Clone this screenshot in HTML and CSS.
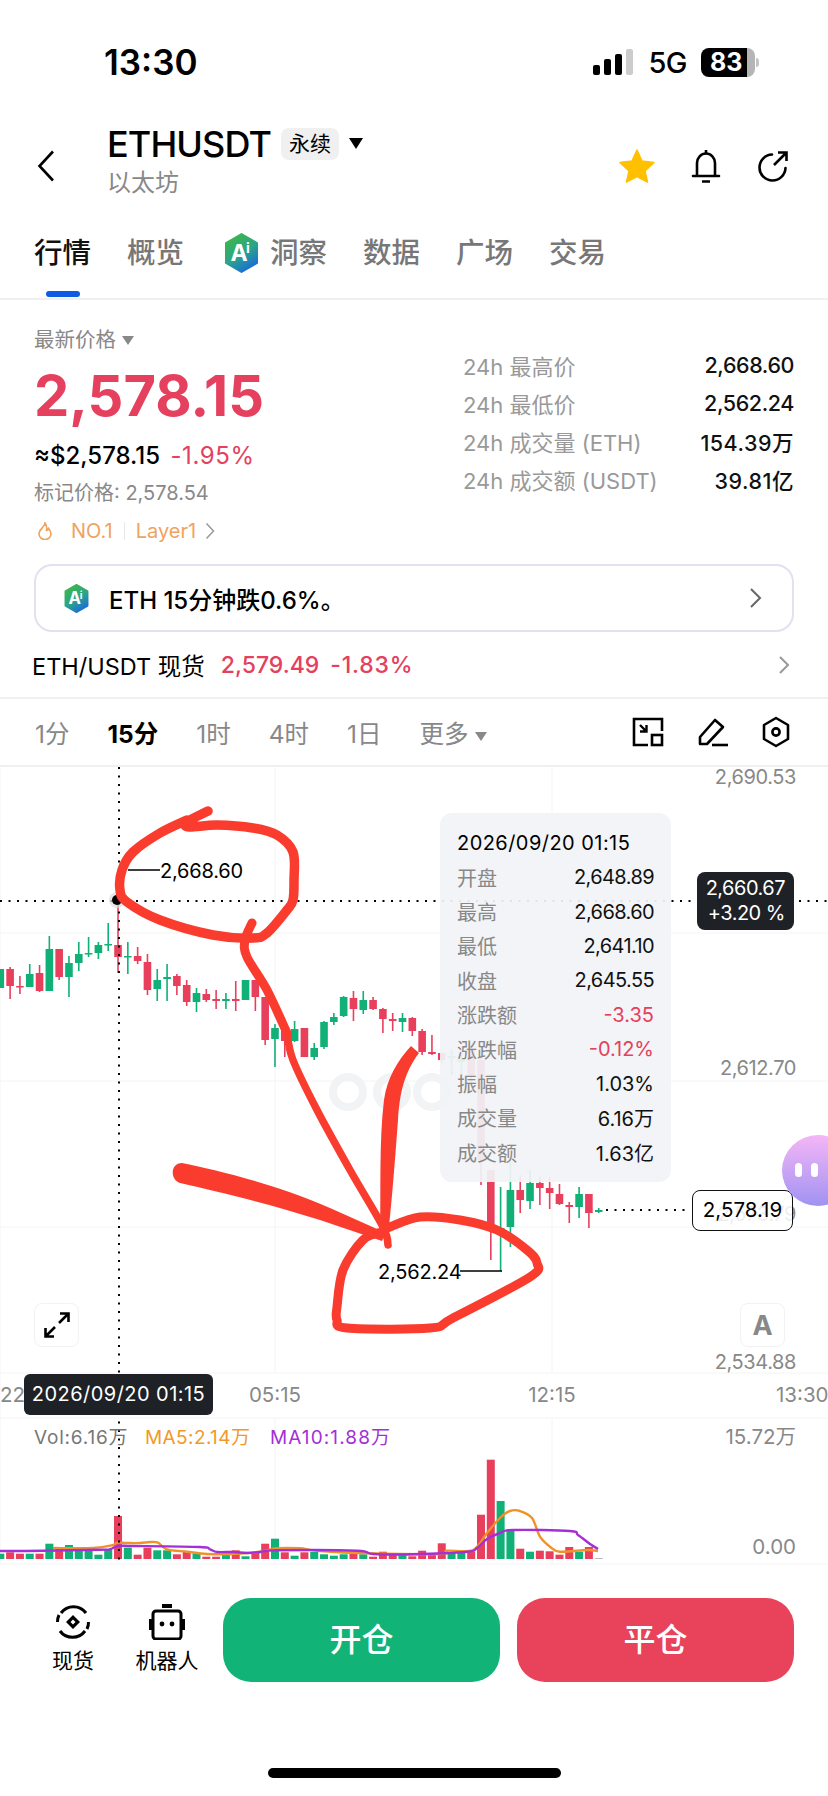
FILE: index.html
```html
<!DOCTYPE html>
<html lang="zh-CN">

<head>
    <meta charset="UTF-8" />
    <title>ETHUSDT 永续</title>
    <link rel="stylesheet" href="styles.css">
</head>

<body>
    <div class="page">
        <div class="status-bar">
            <span class="clock">13:30</span>
            <div class="status-right">
                <svg class="signal" width="41" height="26" viewBox="0 0 41 26">
                    <rect x="0" y="16" width="7" height="10" rx="2" fill="#000" />
                    <rect x="11" y="10" width="7" height="16" rx="2" fill="#000" />
                    <rect x="22" y="5" width="7" height="21" rx="2" fill="#000" />
                    <rect x="33" y="0" width="7" height="26" rx="2" fill="#ccc" />
                </svg>
                <span class="net">5G</span>
                <div class="battery"><span>83</span></div>
            </div>
        </div>

        <div class="symbol-head">
            <svg class="back" width="18" height="32" viewBox="0 0 18 32">
                <path d="M16 1.5 L2.5 16 L16 30.5" fill="none" stroke="#000" stroke-width="2.6" />
            </svg>
            <div class="symbol-title">
                <div class="symbol-line">
                    <span class="symbol-name">ETHUSDT</span>
                    <span class="symbol-badge">永续</span>
                    <span class="tri tri-black"></span>
                </div>
                <div class="symbol-sub">以太坊</div>
            </div>
            <div class="head-icons">
                <svg width="36" height="34" viewBox="0 0 36 34">
                    <path d="M18 1 L23 12 L35 13.5 L26 22 L28.5 33 L18 27.5 L7.5 33 L10 22 L1 13.5 L13 12 Z" fill="#ffc000" stroke="#ffc000" stroke-width="1.5" stroke-linejoin="round" />
                </svg>
                <svg width="30" height="34" viewBox="0 0 30 34">
                    <path d="M6 26 V14 a9 9.5 0 0 1 18 0 V26 M2 27 H28" fill="none" stroke="#000" stroke-width="2.6" stroke-linecap="round" />
                    <path d="M15 1 V4 M11 32.5 H19" fill="none" stroke="#000" stroke-width="2.6" />
                </svg>
                <svg width="32" height="32" viewBox="0 0 32 32">
                    <path d="M15 4.5 A13 13 0 1 0 28.5 18" fill="none" stroke="#000" stroke-width="2.6" stroke-linecap="round" />
                    <path d="M17 15 L29 3 M21 2.5 H29.5 V11" fill="none" stroke="#000" stroke-width="2.6" />
                </svg>
            </div>
        </div>

        <div class="tabs">
            <span class="tab tab-active">行情</span>
            <span class="tab">概览</span>
            <span class="tab tab-ai">
                <svg class="ai-logo" width="35" height="40" viewBox="0 0 35 40">
                    <defs>
                        <linearGradient id="aiGrad" x1="0.1" y1="0.1" x2="0.6" y2="1">
                            <stop offset="0" stop-color="#3db54a" />
                            <stop offset="0.55" stop-color="#2aa58a" />
                            <stop offset="1" stop-color="#1c6fd6" />
                        </linearGradient>
                    </defs>
                    <path d="M17.5 1 L33 10 V30 L17.5 39 L2 30 V10 Z" fill="url(#aiGrad)" stroke="url(#aiGrad)" stroke-width="2" stroke-linejoin="round" />
                    <text class="ai-letter" x="15" y="28" font-size="23">A</text>
                    <text class="ai-letter" x="24" y="20" font-size="14">i</text>
                </svg>
                洞察
            </span>
            <span class="tab">数据</span>
            <span class="tab">广场</span>
            <span class="tab">交易</span>
        </div>

        <div class="market">
            <div class="market-left">
                <div class="price-label">最新价格 <span class="tri tri-grey"></span></div>
                <div class="last-price">2,578.15</div>
                <div class="usd-line">≈$2,578.15 <span class="red">-1.95%</span></div>
                <div class="mark-price">标记价格: 2,578.54</div>
                <div class="tags">
                    <svg width="16" height="18" viewBox="0 0 16 18">
                        <path d="M8 1 C8 5 2 7 2 12 A6 5.5 0 0 0 14 12 C14 9.5 12.5 8 11.5 6.5 C11 8 10 8.5 9.5 8.5 C10 6 9.5 3 8 1 Z" fill="none" stroke="#f0a35e" stroke-width="1.6" />
                    </svg>
                    <span class="tag-rank">NO.1</span>
                    <span class="tag-sep"></span>
                    <span>Layer1</span>
                    <svg width="10" height="18" viewBox="0 0 10 18">
                        <path d="M1.5 1.5 L8.5 9 L1.5 16.5" fill="none" stroke="#999" stroke-width="1.5" />
                    </svg>
                </div>
            </div>
            <div class="stats">
                <div class="stat-row"><span>24h 最高价</span><b>2,668.60</b></div>
                <div class="stat-row"><span>24h 最低价</span><b>2,562.24</b></div>
                <div class="stat-row"><span>24h 成交量 (ETH)</span><b class="stat-wide">154.39万</b></div>
                <div class="stat-row"><span>24h 成交额 (USDT)</span><b class="stat-wide">39.81亿</b></div>
            </div>
        </div>

        <div class="ai-box">
            <svg width="27" height="29" viewBox="0 0 35 40">
                <path d="M17.5 1 L33 10 V30 L17.5 39 L2 30 V10 Z" fill="url(#aiGrad)" stroke="url(#aiGrad)" stroke-width="2" stroke-linejoin="round" />
                <text class="ai-letter" x="15" y="28" font-size="23">A</text>
                <text class="ai-letter" x="24" y="20" font-size="14">i</text>
            </svg>
            <span class="ai-text">ETH 15分钟跌0.6%。</span>
            <svg class="ai-arrow" width="13" height="22" viewBox="0 0 13 22">
                <path d="M2 2 L11 11 L2 20" fill="none" stroke="#666" stroke-width="2" />
            </svg>
        </div>

        <div class="spot-row">
            <span class="spot-name">ETH/USDT 现货</span>
            <span class="spot-price red">2,579.49</span>
            <span class="spot-change red">-1.83%</span>
            <svg class="spot-arrow" width="12" height="20" viewBox="0 0 12 20">
                <path d="M2 2 L10 10 L2 18" fill="none" stroke="#999" stroke-width="2" />
            </svg>
        </div>

        <div class="intervals">
            <span>1分</span>
            <span class="interval-active">15分</span>
            <span>1时</span>
            <span>4时</span>
            <span>1日</span>
            <span class="interval-more">更多 <span class="tri tri-grey"></span></span>
            <div class="tool-icons">
                <svg width="32" height="30" viewBox="0 0 32 30">
                    <path d="M16 28 H2 V2 H30 V14" fill="none" stroke="#000" stroke-width="2.6" />
                    <rect x="20" y="18" width="10" height="10" fill="none" stroke="#000" stroke-width="2.6" />
                    <path d="M8 8 L14 14 M14.5 8 V14.5 H8" fill="none" stroke="#000" stroke-width="2.4" />
                </svg>
                <svg width="32" height="30" viewBox="0 0 32 30">
                    <path d="M3 27 V20 L18 3 L26 10 L10 27 Z" fill="none" stroke="#000" stroke-width="2.6" stroke-linejoin="round" />
                    <path d="M15 28 H31" fill="none" stroke="#000" stroke-width="2.6" />
                </svg>
                <svg width="28" height="32" viewBox="0 0 28 32">
                    <path d="M14 2 L26 9 V23 L14 30 L2 23 V9 Z" fill="none" stroke="#000" stroke-width="2.6" stroke-linejoin="round" />
                    <circle cx="14" cy="16" r="3.6" fill="none" stroke="#000" stroke-width="2.6" />
                </svg>
            </div>
        </div>

        <div class="chart">
            <svg class="chart-svg" width="828" height="798" viewBox="0 767 828 798">
                <g class="grid">
                    <path d="M275 767 V1373 M552 767 V1373 M275 1418 V1564 M552 1418 V1564 M0 767 V1564" />
                    <path d="M0 933 H828 M0 1081 H828 M0 1227 H828 M0 1373 H828 M0 1418 H828 M0 1564 H828" />
                </g>
                <g class="watermark">
                    <circle cx="348" cy="1092" r="15" />
                    <circle cx="392" cy="1092" r="15" />
                    <circle cx="432" cy="1092" r="15" />
                </g>
                <g class="axis">
                    <text x="796" y="784">2,690.53</text>
                    <text x="796" y="1075">2,612.70</text>
                    <text x="796" y="1221">2,573.79</text>
                    <text x="796" y="1369">2,534.88</text>
                    <text x="275" y="1402" class="time mid">05:15</text>
                    <text x="552" y="1402" class="time mid">12:15</text>
                    <text x="776" y="1402" class="time start">13:30</text>
                    <text x="0" y="1402" class="time start">22</text>
                    <text x="796" y="1444" class="time">15.72万</text>
                    <text x="796" y="1554" class="time">0.00</text>
                </g>
                <g id="volume"></g>
                <g id="candles"></g>
                <g id="maLines"></g>
                <path class="dots" d="M119 767 V1566" />
                <path class="dots" d="M0 901 H828" />
                <path class="dots" d="M606 1210 H690" />
                <circle cx="117" cy="900" r="8" fill="#ddd" opacity="0.7" />
                <circle cx="117" cy="900" r="5" fill="#000" />
                <path class="leader" d="M128 870 H160 M460 1271 H502" />
                <text class="mark-label" x="160" y="878">2,668.60</text>
                <text class="mark-label" x="378" y="1279">2,562.24</text>
                <text class="vol-label" x="34" y="1444">Vol:6.16万</text>
                <text class="vol-label ma5" x="145" y="1444">MA5:2.14万</text>
                <text class="vol-label ma10" x="270" y="1444">MA10:1.88万</text>
                <g id="scribble"></g>
                <path class="scribble-fill" d="M182 1163 C215 1170 270 1182 330 1208 L386 1233 L382 1241 L320 1220 C270 1204 220 1192 180 1183 C170 1180 170 1163 182 1163 Z" />
                <path class="scribble-fill" d="M411 1046 L419 1053 C405 1072 400 1090 398 1120 C395 1160 392 1200 388 1236 L380 1236 C381 1190 379 1140 384 1100 C387 1078 398 1060 411 1046 Z" />
            </svg>

            <div class="ohlc">
                <div class="ohlc-date">2026/09/20 01:15</div>
                <div class="ohlc-row"><span>开盘</span><b class="num">2,648.89</b></div>
                <div class="ohlc-row"><span>最高</span><b class="num">2,668.60</b></div>
                <div class="ohlc-row"><span>最低</span><b class="num">2,641.10</b></div>
                <div class="ohlc-row"><span>收盘</span><b class="num">2,645.55</b></div>
                <div class="ohlc-row"><span>涨跌额</span><b class="red">-3.35</b></div>
                <div class="ohlc-row"><span>涨跌幅</span><b class="red">-0.12%</b></div>
                <div class="ohlc-row"><span>振幅</span><b>1.03%</b></div>
                <div class="ohlc-row"><span>成交量</span><b>6.16万</b></div>
                <div class="ohlc-row"><span>成交额</span><b>1.63亿</b></div>
            </div>

            <div class="cross-price">2,660.67<br>+3.20 %</div>
            <div class="last-tag">2,578.19</div>
            <div class="date-tag">2026/09/20 01:15</div>
            <div class="bubble"><i></i><i></i></div>
            <div class="chart-btn btn-expand">
                <svg width="28" height="28" viewBox="0 0 28 28">
                    <path d="M16 12 L25 3 M17 2.5 H25.5 V11 M12 16 L3 25 M2.5 17 V25.5 H11" fill="none" stroke="#000" stroke-width="2.6" />
                </svg>
            </div>
            <div class="chart-btn btn-auto">A</div>
        </div>

        <div class="action-bar">
            <div class="action-item">
                <svg width="36" height="36" viewBox="0 0 36 36">
                    <path d="M6 9 A15.5 15.5 0 0 1 31 9 M30 27 A15.5 15.5 0 0 1 5 27" fill="none" stroke="#000" stroke-width="3" />
                    <path d="M2.5 18 A15.5 15.5 0 0 1 4 11 M33.5 18 A15.5 15.5 0 0 1 32 25" fill="none" stroke="#000" stroke-width="3" />
                    <path d="M18 11 L25 18 L18 25 L11 18 Z M18 15.5 L20.5 18 L18 20.5 L15.5 18 Z" fill="#000" fill-rule="evenodd" />
                </svg>
                <span>现货</span>
            </div>
            <div class="action-item">
                <svg width="36" height="36" viewBox="0 0 36 36">
                    <rect x="4" y="7" width="28" height="28" rx="3" fill="none" stroke="#000" stroke-width="3" />
                    <rect x="13" y="0" width="10" height="4" fill="#000" />
                    <rect x="0" y="15" width="3" height="11" fill="#000" />
                    <rect x="33" y="15" width="3" height="11" fill="#000" />
                    <circle cx="13" cy="20" r="2.4" fill="#000" />
                    <circle cx="23" cy="20" r="2.4" fill="#000" />
                </svg>
                <span>机器人</span>
            </div>
            <div class="trade-btn trade-open">开仓</div>
            <div class="trade-btn trade-close">平仓</div>
        </div>

        <div class="home-bar"></div>
    </div>

    <script src="chart.js"></script>
</body>

</html>
```

FILE: styles.css
```css
* {
    box-sizing: border-box;
}

body {
    margin: 0;
    background: #fff;
    color: #000;
    font-family: Inter, "Noto Sans CJK SC", sans-serif;
}

.page {
    width: 828px;
    height: 1796px;
    overflow: hidden;
}

.red {
    color: #e5405e;
}

/* triangles */
.tri {
    display: inline-block;
    width: 0;
    height: 0;
    border-left: 6.5px solid transparent;
    border-right: 6.5px solid transparent;
}

.tri-black {
    border-left-width: 7.5px;
    border-right-width: 7.5px;
    border-top: 11px solid #000;
}

.tri-grey {
    border-top: 9px solid #888;
    vertical-align: 2px;
}

/* STATUS BAR */
.status-bar {
    height: 124px;
    padding: 0 73px 0 104px;
    display: flex;
    justify-content: space-between;
    align-items: center;
}

.clock {
    font-size: 35px;
    font-weight: 600;
}

.status-right {
    display: flex;
    align-items: center;
    gap: 14px;
}

.net {
    font-size: 29px;
    font-weight: 500;
    letter-spacing: -0.5px;
}

.battery {
    position: relative;
    width: 54px;
    height: 29px;
    border-radius: 8px;
    background: linear-gradient(90deg, #000 85%, #b5b5b5 85%);
    color: #fff;
    font-size: 25px;
    font-weight: 700;
    line-height: 29px;
    padding-left: 9px;
}

.battery::after {
    content: "";
    position: absolute;
    left: 55px;
    top: 10px;
    width: 3px;
    height: 9px;
    border-radius: 0 3px 3px 0;
    background: #c4c4c4;
}

/* SYMBOL HEAD */
.symbol-head {
    height: 84px;
    padding: 0 39px 0 37px;
    display: flex;
    align-items: center;
}

.symbol-title {
    align-self: flex-start;
    margin-left: 52px;
}

.symbol-line {
    height: 40px;
    display: flex;
    align-items: center;
}

.symbol-name {
    font-size: 36px;
    font-weight: 500;
    letter-spacing: -0.9px;
}

.symbol-badge {
    margin-left: 10px;
    width: 58px;
    height: 32px;
    border-radius: 8px;
    background: #f0f0f0;
    font-size: 21px;
    line-height: 32px;
    text-align: center;
}

.symbol-line .tri {
    margin-left: 10px;
    margin-top: -2px;
}

.symbol-sub {
    font-size: 24px;
    line-height: 38px;
    color: #888;
}

.head-icons {
    margin-left: auto;
    display: flex;
    align-items: center;
    gap: 36px;
}

/* TABS */
.tabs {
    height: 92px;
    padding: 30px 0 0 34px;
    display: flex;
    gap: 36px;
    border-bottom: 2px solid #f0f0f0;
}

.tab {
    position: relative;
    height: 30px;
    font-size: 28.5px;
    line-height: 30px;
    font-weight: 500;
    color: #777;
    display: flex;
    align-items: center;
}

.tab-active {
    color: #111;
}

.tab-active::after {
    content: "";
    position: absolute;
    left: 12px;
    top: 53px;
    width: 34px;
    height: 6px;
    border-radius: 3px;
    background: #0d5be5;
}

.tab-ai {
    margin-left: 4px;
    gap: 11px;
}

.ai-letter {
    fill: #fff;
    font-family: Inter, sans-serif;
    font-weight: 700;
    text-anchor: middle;
}

/* MARKET */
.market {
    padding: 0 34px;
    display: flex;
    justify-content: space-between;
}

.price-label {
    margin-top: 29px;
    font-size: 20.5px;
    line-height: 22px;
    color: #888;
}

.last-price {
    margin-top: 15px;
    font-size: 56px;
    line-height: 60px;
    font-weight: 700;
    color: #e5405e;
}

.usd-line {
    margin-top: 15px;
    font-size: 24px;
    line-height: 30px;
    font-weight: 500;
}

.usd-line .red {
    margin-left: 4px;
    font-weight: 400;
    letter-spacing: 0.6px;
}

.mark-price {
    margin-top: 9px;
    font-size: 20px;
    line-height: 26px;
    color: #888;
}

.tags {
    margin-top: 13px;
    height: 24px;
    display: flex;
    align-items: center;
    gap: 9px;
    font-size: 20px;
    color: #f0a35e;
}

.tags svg:first-child {
    margin: 0 9px 0 3px;
}

.tag-sep {
    width: 1px;
    height: 18px;
    background: #e8e8e8;
    margin: 0 2px;
}

.stats {
    width: 331px;
    padding-top: 46px;
}

.stat-row {
    height: 38px;
    display: flex;
    justify-content: space-between;
    align-items: center;
    font-size: 22px;
    color: #999;
}

.stat-row b {
    font-size: 21.5px;
    font-weight: 500;
    letter-spacing: -0.4px;
    color: #111;
}

.stat-row .stat-wide {
    letter-spacing: 0.5px;
}

/* AI BOX */
.ai-box {
    margin: 21px 34px 0;
    height: 68px;
    border: 2px solid #e4e0f0;
    border-radius: 18px;
    padding: 0 30px 0 27px;
    display: flex;
    align-items: center;
    gap: 19px;
}

.ai-text {
    font-size: 24px;
    font-weight: 500;
}

.ai-arrow {
    margin-left: auto;
}

/* SPOT ROW */
.spot-row {
    height: 67px;
    padding: 0 38px 0 32px;
    display: flex;
    align-items: center;
    border-bottom: 2px solid #f0f0f0;
    font-size: 23.5px;
}

.spot-name {
    font-weight: 400;
}

.spot-price {
    margin-left: 16px;
    font-size: 23px;
    font-weight: 500;
}

.spot-change {
    margin-left: 11px;
    font-size: 23px;
    font-weight: 500;
    letter-spacing: 0.8px;
}

.spot-arrow {
    margin-left: auto;
}

/* INTERVALS */
.intervals {
    height: 68px;
    padding: 0 38px 0 35px;
    display: flex;
    align-items: center;
    gap: 38px;
    border-bottom: 2px solid #f0f0f0;
    font-size: 24.5px;
    color: #888;
}

.interval-active {
    color: #000;
    font-weight: 700;
}

.tool-icons {
    margin-left: auto;
    display: flex;
    align-items: center;
    gap: 33px;
}

/* CHART */
.chart {
    position: relative;
    height: 798px;
}

.chart-svg {
    display: block;
    overflow: visible;
}

.grid path {
    fill: none;
    stroke: #f4f4f4;
    stroke-width: 1;
}

.watermark circle {
    fill: none;
    stroke: #f2f3f4;
    stroke-width: 8;
}

.axis text {
    font-size: 20px;
    letter-spacing: -0.4px;
    fill: #888;
    text-anchor: end;
}

.axis .time {
    font-size: 20.5px;
    letter-spacing: 0;
}

.axis .mid {
    text-anchor: middle;
}

.axis .start {
    text-anchor: start;
}

.dots {
    fill: none;
    stroke: #000;
    stroke-width: 2;
    stroke-dasharray: 2 6.5;
}

.leader {
    fill: none;
    stroke: #000;
    stroke-width: 1.5;
}

.mark-label {
    font-size: 20px;
    letter-spacing: -0.2px;
    fill: #000;
}

.vol-label {
    font-size: 19px;
    letter-spacing: 0.8px;
    fill: #777;
}

.vol-label.ma5 {
    letter-spacing: 0.4px;
    fill: #f09a28;
}

.vol-label.ma10 {
    letter-spacing: 1.1px;
    fill: #a52fd6;
}

.scribble-line {
    fill: none;
    stroke: #fa3c2f;
    stroke-linecap: round;
    stroke-linejoin: round;
}

.scribble-fill {
    fill: #fa3c2f;
}

.ohlc {
    position: absolute;
    left: 440px;
    top: 46px;
    width: 231px;
    height: 369px;
    padding: 13px 17px;
    border-radius: 12px;
    background: rgba(241, 243, 246, 0.93);
    font-size: 20px;
}

.ohlc-date {
    height: 34px;
    line-height: 34px;
    letter-spacing: 0.45px;
    white-space: nowrap;
}

.ohlc-row {
    height: 34.4px;
    display: flex;
    justify-content: space-between;
    align-items: center;
    color: #888;
}

.ohlc-row b {
    font-weight: 400;
    color: #111;
}

.ohlc-row .num {
    letter-spacing: -0.6px;
}

.ohlc-row .red {
    color: #e5405e;
}

.cross-price {
    position: absolute;
    left: 697px;
    top: 105px;
    width: 97px;
    height: 58px;
    padding: 4px 9px 0 0;
    border-radius: 8px;
    background: #1e2126;
    color: #fff;
    font-size: 20px;
    letter-spacing: -0.5px;
    line-height: 25px;
    text-align: right;
}

.last-tag {
    position: absolute;
    left: 692px;
    top: 423px;
    width: 101px;
    height: 41px;
    border: 1.5px solid #111;
    border-radius: 8px;
    background: rgba(255, 255, 255, 0.85);
    font-size: 20.5px;
    line-height: 38px;
    text-align: center;
}

.date-tag {
    position: absolute;
    left: 24px;
    top: 607px;
    width: 189px;
    height: 41px;
    border-radius: 6px;
    background: #1e2126;
    color: #fff;
    font-size: 20px;
    letter-spacing: 0.45px;
    line-height: 41px;
    text-align: center;
}

.bubble {
    position: absolute;
    left: 782px;
    top: 368px;
    width: 72px;
    height: 71px;
    border-radius: 50%;
    background: linear-gradient(180deg, #f4b6f6, #a093f2);
    display: flex;
    gap: 9px;
    padding: 28px 0 0 13px;
}

.bubble i {
    width: 7px;
    height: 14px;
    border-radius: 3.5px;
    background: #fff;
}

.chart-btn {
    position: absolute;
    top: 536px;
    width: 45px;
    height: 44px;
    border: 1.5px solid #f2f2f2;
    border-radius: 8px;
    background: #fff;
    display: flex;
    align-items: center;
    justify-content: center;
}

.btn-expand {
    left: 34px;
}

.btn-auto {
    left: 740px;
    font-size: 27px;
    font-weight: 700;
    color: #888;
}

/* BOTTOM */
.action-bar {
    padding: 33px 34px 0;
    display: flex;
    gap: 16px;
}

.action-item {
    width: 78px;
    height: 84px;
    padding-top: 6px;
    display: flex;
    flex-direction: column;
    align-items: center;
    gap: 9px;
    font-size: 21px;
    line-height: 24px;
    white-space: nowrap;
}

.trade-btn {
    flex: 1;
    height: 84px;
    border-radius: 28px;
    color: #fff;
    font-size: 32px;
    font-weight: 500;
    line-height: 84px;
    text-align: center;
}

.trade-open {
    background: #11b377;
    margin-left: 1px;
}

.trade-close {
    background: #e9435b;
    margin-left: 1px;
}

.home-bar {
    width: 293px;
    height: 10px;
    margin: 86px auto 0;
    border-radius: 5px;
    background: #000;
}
```

FILE: chart.js
```js
// each candle: wick top, wick bottom, body top, body bottom, colour
const candles = [
    [969, 988, 969, 988, "g"], [967, 999, 969, 986, "r"], [976, 994, 986, 987, "r"], [964, 987, 974, 987, "g"],
    [965, 992, 973, 991, "r"], [936, 991, 949, 991, "g"], [949, 980, 949, 977, "r"], [956, 997, 963, 977, "g"],
    [942, 971, 954, 963, "g"], [937, 957, 953, 954, "g"], [942, 959, 945, 953, "g"], [923, 951, 944, 945, "g"],
    [902, 973, 945, 957, "r"], [942, 974, 956, 957, "g"], [947, 964, 956, 961, "r"], [954, 995, 962, 990, "r"],
    [969, 1001, 980, 989, "g"], [964, 1001, 977, 979, "g"], [974, 995, 976, 986, "r"], [980, 1006, 985, 1002, "r"],
    [988, 1012, 993, 1002, "g"], [989, 1002, 994, 1000, "r"], [990, 1009, 999, 1001, "r"], [993, 1009, 999, 1001, "g"],
    [981, 1011, 999, 1001, "r"], [980, 1000, 980, 1000, "g"], [980, 1011, 980, 997, "r"], [997, 1045, 997, 1040, "r"],
    [1024, 1067, 1028, 1039, "g"], [1030, 1057, 1030, 1041, "r"], [1021, 1042, 1029, 1041, "g"], [1028, 1057, 1028, 1057, "r"],
    [1043, 1060, 1048, 1057, "g"], [1021, 1049, 1022, 1047, "g"], [1013, 1025, 1017, 1022, "g"], [996, 1017, 997, 1016, "g"],
    [991, 1021, 998, 1009, "r"], [991, 1014, 1000, 1010, "g"], [997, 1010, 1000, 1009, "r"], [1008, 1033, 1009, 1019, "r"],
    [1013, 1031, 1019, 1021, "r"], [1013, 1032, 1018, 1022, "g"], [1017, 1036, 1018, 1031, "r"], [1029, 1055, 1031, 1052, "r"],
    [1035, 1055, 1052, 1054, "r"], [1053, 1063, 1053, 1060, "r"], [1050, 1075, 1056, 1058, "g"], [1050, 1078, 1060, 1062, "g"],
    [1045, 1085, 1050, 1075, "r"], [1045, 1185, 1060, 1160, "r"], [1170, 1260, 1170, 1225, "r"], [1187, 1271, 1228, 1229, "g"],
    [1160, 1247, 1190, 1227, "g"], [1175, 1213, 1190, 1200, "r"], [1170, 1209, 1183, 1201, "g"], [1177, 1205, 1183, 1188, "r"],
    [1177, 1209, 1188, 1193, "r"], [1184, 1205, 1194, 1204, "r"], [1202, 1223, 1205, 1207, "r"], [1187, 1218, 1194, 1207, "g"],
    [1194, 1228, 1194, 1213, "r"], [1208, 1213, 1210, 1212, "g"]
];

// volume bar heights and colours, same order as the candles
const volume = [
    [5.3, "g"], [6.7, "r"], [5.3, "r"], [5.3, "g"], [5.3, "r"], [15.3, "g"], [11.3, "r"], [14, "g"],
    [8.7, "g"], [8.7, "g"], [4.3, "g"], [9.3, "g"], [43, "r"], [11.3, "g"], [4.3, "r"], [11.3, "r"],
    [8.7, "g"], [8.7, "g"], [4.7, "r"], [7.3, "r"], [5.7, "g"], [2.3, "r"], [2.3, "r"], [4.3, "g"],
    [8.7, "r"], [2.7, "g"], [7.3, "r"], [15.3, "r"], [20.3, "g"], [6.7, "r"], [3.3, "g"], [6.7, "r"],
    [7, "g"], [4.7, "g"], [3.3, "g"], [4.7, "g"], [6, "r"], [4.7, "g"], [2.3, "r"], [7.3, "r"],
    [5.3, "r"], [4, "g"], [2.7, "r"], [8.3, "r"], [6, "r"], [15.7, "r"], [5.3, "g"], [6.7, "g"],
    [7.7, "r"], [44.3, "r"], [99.3, "r"], [58, "g"], [30, "g"], [10.3, "r"], [7.3, "g"], [8.3, "r"],
    [7.7, "r"], [4.3, "r"], [12, "r"], [7.3, "g"], [12, "r"], [1, "n"]
];

const colours = { g: "#10b077", r: "#e8405c", n: "#bbb" };
const ma10 = [[0, 1551], [20, 1551], [43, 1550.7], [100, 1549.7], [110, 1549.3], [118, 1546], [133, 1546], [200, 1547], [210, 1549.3], [217, 1552], [233, 1552], [247, 1553], [260, 1552], [277, 1550.3], [357, 1550.7], [373, 1554], [413, 1554.3], [467, 1551.7], [477, 1548], [487, 1539], [500, 1533], [513, 1530], [570, 1531], [578, 1535], [590, 1544], [598, 1549]];
const ma5 = [[53, 1548], [93, 1548], [113, 1545], [117, 1542.7], [127, 1543], [140, 1543], [150, 1542], [158, 1542.7], [167, 1549.3], [187, 1551.7], [207, 1554], [233, 1554], [260, 1551.7], [277, 1548.3], [300, 1548.3], [317, 1550.7], [367, 1553.3], [440, 1554], [447, 1550.7], [473, 1550], [487, 1533], [500, 1518], [510, 1511], [520, 1511], [532, 1518], [540, 1536.7], [550, 1546.7], [560, 1551.7], [587, 1550], [598, 1551]];

// pen marks drawn over the chart: [width, points]
const scribbles = [
    [9.5, [[208, 811], [187, 822], [189, 827], [217, 825], [253, 828], [277, 835], [293, 852], [294, 880], [293, 900], [287, 910], [267, 933], [253, 938], [213, 935], [160, 920], [127, 902], [120, 890], [122, 870], [133, 852], [160, 833], [187, 820]]],
    [9, [[252, 923], [245, 940], [247, 957], [267, 990], [287, 1033]]],
    [7.5, [[287, 1033], [293, 1060], [317, 1110], [350, 1170], [383, 1227], [388, 1245]]],
    [9, [[382, 1232], [363, 1240], [343, 1270], [337, 1307], [337, 1320], [347, 1328], [430, 1328], [453, 1318], [530, 1277], [537, 1263], [527, 1250], [497, 1230], [460, 1220], [420, 1217], [387, 1228]]]
];

const NS = "http://www.w3.org/2000/svg";
const STEP = 9.81;

function add(parent, tag, attrs) {
    const el = document.createElementNS(NS, tag);
    for (const key in attrs) {
        el.setAttribute(key, attrs[key]);
    }
    document.getElementById(parent).appendChild(el);
}

// smooth line through the points
function smooth(pts) {
    let d = "M" + pts[0].join(" ");
    for (let i = 0; i < pts.length - 1; i++) {
        const p0 = pts[i - 1] || pts[i];
        const p1 = pts[i];
        const p2 = pts[i + 1];
        const p3 = pts[i + 2] || p2;
        d += " C" + (p1[0] + (p2[0] - p0[0]) / 6) + " " + (p1[1] + (p2[1] - p0[1]) / 6) +
            " " + (p2[0] - (p3[0] - p1[0]) / 6) + " " + (p2[1] - (p3[1] - p1[1]) / 6) +
            " " + p2[0] + " " + p2[1];
    }
    return d;
}

candles.forEach((c, i) => {
    const x = i * STEP + 0.3;
    const fill = colours[c[4]];
    add("candles", "rect", { x: x - 0.8, y: c[0], width: 1.6, height: c[1] - c[0], fill: fill });
    add("candles", "rect", { x: x - 3.8, y: c[2], width: 7.6, height: Math.max(c[3] - c[2], 1.5), fill: fill });
});

volume.forEach((v, i) => {
    const x = i * STEP + 0.3;
    add("volume", "rect", { x: x - 4, y: 1559 - v[0], width: 8, height: v[0], fill: colours[v[1]] });
});

add("maLines", "path", { d: smooth(ma5), fill: "none", stroke: "#f0922a", "stroke-width": 2.4 });
add("maLines", "path", { d: smooth(ma10), fill: "none", stroke: "#a52fd6", "stroke-width": 2.4 });

scribbles.forEach(s => {
    add("scribble", "path", { d: smooth(s[1]), class: "scribble-line", "stroke-width": s[0] });
});
```
